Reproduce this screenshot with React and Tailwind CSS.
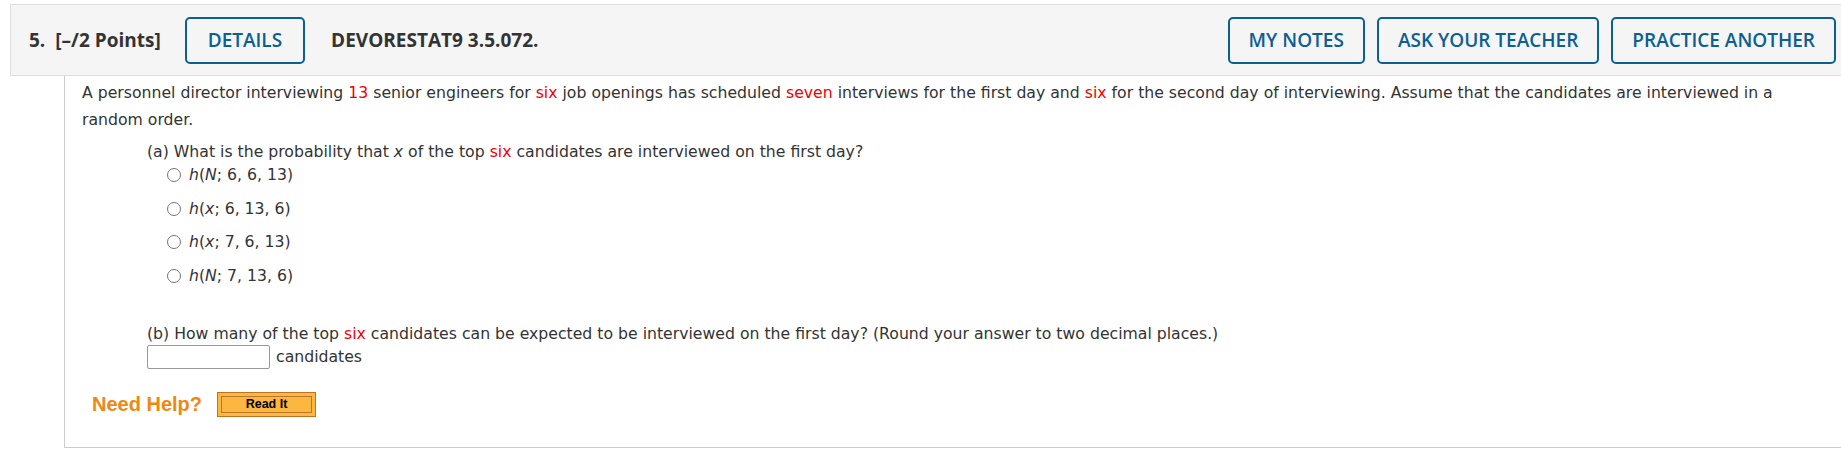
import React from 'react';

const Red = ({ children }) => <span className="text-[#e00]">{children}</span>;

const Radio = ({ children }) => (
  <label className="flex items-center gap-[8px] h-[24px]">
    <span className="w-[14px] h-[14px] rounded-full border border-[#767676] bg-white shrink-0" />
    <span>{children}</span>
  </label>
);

const HeaderButton = ({ children, wide }) => (
  <button
    className={
      wide
        ? 'h-[47px] px-[21px] border-2 border-[#0b5f93] rounded-[5px] text-[#0b5f93] text-[19px] font-semibold bg-[#f5f5f5]'
        : 'h-[47px] px-[19px] border-2 border-[#0b5f93] rounded-[5px] text-[#0b5f93] text-[19px] font-semibold bg-[#f5f5f5]'
    }
  >
    {children}
  </button>
);

export default function App() {
  return (
    <div className="w-[1841px] h-[451px] bg-white text-[#333] font-['DejaVu_Sans',Verdana,sans-serif] text-[15.7px] overflow-hidden">
      {/* Question header */}
      <div className="ml-[10px] mt-[4px] h-[72px] flex items-center border border-r-0 border-[#dddddd] bg-[#f5f5f5] pl-[18px] pr-[5px] font-['Open_Sans',sans-serif] text-[19px] font-semibold text-[#333]">
        <span className="font-bold">5.</span>
        <span className="ml-[10px] font-bold">[–/2 Points]</span>
        <div className="ml-[24px]">
          <HeaderButton wide>DETAILS</HeaderButton>
        </div>
        <span className="ml-[26px] font-bold">DEVORESTAT9 3.5.072.</span>
        <div className="ml-auto flex gap-[12px]">
          <HeaderButton>MY NOTES</HeaderButton>
          <HeaderButton>ASK YOUR TEACHER</HeaderButton>
          <HeaderButton>PRACTICE ANOTHER</HeaderButton>
        </div>
      </div>

      {/* Question body */}
      <div className="ml-[64px] h-[372px] border-l border-b border-[#cccccc] pl-[17px] pt-[3px]">
        <p className="leading-[27px] pr-[60px]">
          A personnel director interviewing <Red>13</Red> senior engineers for <Red>six</Red> job openings has scheduled{' '}
          <Red>seven</Red> interviews for the first day and <Red>six</Red> for the second day of interviewing. Assume that the
          candidates are interviewed in a random order.
        </p>

        <div className="ml-[65px] mt-[8px]">
          <p className="leading-[22px]">
            (a) What is the probability that <i>x</i> of the top <Red>six</Red> candidates are interviewed on the first day?
          </p>
          <div className="ml-[20px] flex flex-col gap-[9.5px]">
            <Radio><i>h</i>(<i>N</i>; 6, 6, 13)</Radio>
            <Radio><i>h</i>(<i>x</i>; 6, 13, 6)</Radio>
            <Radio><i>h</i>(<i>x</i>; 7, 6, 13)</Radio>
            <Radio><i>h</i>(<i>N</i>; 7, 13, 6)</Radio>
          </div>

          <p className="mt-[35.5px] leading-[22px]">
            (b) How many of the top <Red>six</Red> candidates can be expected to be interviewed on the first day? (Round your
            answer to two decimal places.)
          </p>
          <div className="flex items-center gap-[6px]">
            <input
              type="text"
              className="w-[123px] h-[24px] border border-[#999] rounded-[2px] bg-white outline-none"
            />
            <span>candidates</span>
          </div>
        </div>

        <div className="flex items-center mt-[20px] ml-[10px] gap-[15px]">
          <span className="font-['Liberation_Sans',Arial,sans-serif] font-bold text-[20px] text-[#f0870f]">Need Help?</span>
          <button className="h-[25px] w-[99px] border border-[#c4711f] bg-[#fbb73f] p-[3px]">
            <span className="flex items-center justify-center h-full border border-[#b8772c] font-['Liberation_Sans',Arial,sans-serif] font-bold text-[12.5px] text-black">
              Read It
            </span>
          </button>
        </div>
      </div>
    </div>
  );
}
